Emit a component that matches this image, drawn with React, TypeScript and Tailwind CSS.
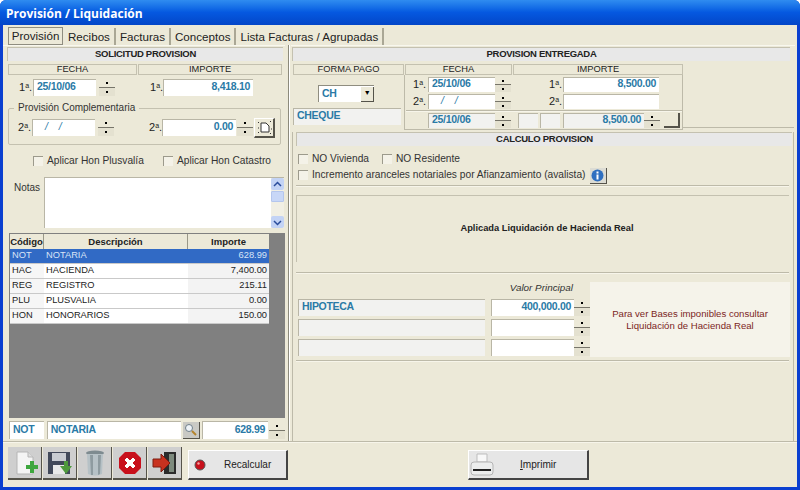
const font = { fontFamily: '"Liberation Sans", Arial, sans-serif' };

const val = "font-bold text-[#2a7aa6] text-[10.5px] tracking-[-0.3px]";

const Spin = ({ h = 17 }: { h?: number }) => (
  <div className={`flex w-[16px] flex-col ${h === 15 ? "h-[15px]" : "h-[17px]"}`}>
    <div className="flex flex-1 items-center justify-center border-b border-[#77756a] bg-[#ece9d8]">
      <div className="h-[2px] w-[2px] bg-black" />
    </div>
    <div className="flex flex-1 items-center justify-center bg-[#e4e1d0]">
      <div className="h-[2px] w-[2px] bg-black" />
    </div>
  </div>
);

const Box = ({ className = "", children }: { className?: string; children?: React.ReactNode }) => (
  <div className={`flex items-center overflow-hidden border-l border-t border-[#b9b6a6] px-[3px] pb-[2px] ${val} ${className}`}>
    {children}
  </div>
);

const Blank = () => (
  <span className="flex gap-[11px] font-normal italic">
    <span>/</span>
    <span>/</span>
  </span>
);

const Head = ({ className = "", children }: { className?: string; children: React.ReactNode }) => (
  <div className={`flex h-[11px] items-center justify-center border border-[#c4c1b0] text-[9.3px] leading-none text-[#222] ${className}`}>
    {children}
  </div>
);

const Banner = ({ className = "", children }: { className?: string; children: React.ReactNode }) => (
  <div className={`flex h-[14px] items-center justify-center border-l border-t border-[#c4c1b0] bg-[#e8e8e8] text-[9.5px] font-bold tracking-[-0.3px] text-[#222] ${className}`}>
    {children}
  </div>
);

const Check = ({ label, className = "" }: { label: string; className?: string }) => (
  <div className={`flex items-center gap-[4px] text-[10.2px] leading-none text-[#333] ${className}`}>
    <div className="h-[10px] w-[10px] border-l border-t border-[#9c9a8c] bg-[#f4f2e8]" />
    {label}
  </div>
);

const Ord = ({ n, className = "" }: { n: string; className?: string }) => (
  <div className={`text-[11px] leading-none text-[#222] ${className}`}>
    {n}
    <sup className="text-[7px]">a</sup>.
  </div>
);

const Sep = ({ className = "" }: { className?: string }) => (
  <div className={`h-[2px] border-t border-[#bdbaa9] bg-[#f7f5ea] ${className}`} />
);

const NewIcon = () => (
  <svg width="26" height="26" viewBox="0 0 26 26">
    <path d="M5 2h11l5 5v17H5z" fill="#f4f4f4" stroke="#b5b5b5" />
    <path d="M16 2v5h5" fill="#ddd" stroke="#b5b5b5" />
    <path d="M14 15h4v-4h4v4h4v4h-4v4h-4v-4h-4z" fill="#3da63d" />
  </svg>
);
const SaveIcon = () => (
  <svg width="28" height="26" viewBox="0 0 28 26">
    <path d="M2 2h22v22H2z" fill="#42495a" />
    <path d="M6 3h14v8H6z" fill="#c9ccd2" />
    <path d="M7 15h12v9H7z" fill="#e9e9e9" />
    <path d="M18 11h4v5h4l-6 8-6-8h4z" fill="#4f9a3d" />
  </svg>
);
const TrashIcon = () => (
  <svg width="22" height="28" viewBox="0 0 22 28">
    <ellipse cx="11" cy="4" rx="9" ry="2.5" fill="#7e8b90" />
    <path d="M3 5h16l-1 20q-7 3-14 0z" fill="#b6c1c6" />
    <path d="M6 6h3v20H7zM14 6h3l-1 19-2 1z" fill="#8e9ba0" />
  </svg>
);
const StopIcon = () => (
  <svg width="24" height="24" viewBox="0 0 24 24">
    <path d="M7 1h10l6 6v10l-6 6H7l-6-6V7z" fill="#c8101c" />
    <path d="M7 9l2-2 3 3 3-3 2 2-3 3 3 3-2 2-3-3-3 3-2-2 3-3z" fill="#fff" stroke="#fff" />
  </svg>
);
const ExitIcon = () => (
  <svg width="26" height="26" viewBox="0 0 26 26">
    <path d="M12 2h12v22H12z" fill="#2b2b2b" />
    <path d="M17 4h5v18h-5z" fill="#7d8a7d" />
    <path d="M1 9h8V4l9 9-9 9v-5H1z" fill="#c8321f" stroke="#7c1c10" />
  </svg>
);
const PrinterIcon = () => (
  <svg width="24" height="24" viewBox="0 0 24 24">
    <path d="M7 1h10v8H7z" fill="#f8f8f8" stroke="#bdbdbd" />
    <path d="M1 12q0-3 3-3h16q3 0 3 3v7q0 3-3 3H4q-3 0-3-3z" fill="#eceded" stroke="#b4b4b4" />
    <path d="M3 16h18v2H3z" fill="#222" />
  </svg>
);
const Chevron = ({ up }: { up?: boolean }) => (
  <svg width="9" height="7" viewBox="0 0 9 7" fill="none" stroke="#2a4c9c" strokeWidth="1.5">
    <path d={up ? "M1 5l3.5-3.5L8 5" : "M1 2l3.5 3.5L8 2"} />
  </svg>
);

const tabs = ["Recibos", "Facturas", "Conceptos", "Lista Facturas / Agrupadas"];

const rows = [
  ["NOT", "NOTARIA", "628.99"],
  ["HAC", "HACIENDA", "7,400.00"],
  ["REG", "REGISTRO", "215.11"],
  ["PLU", "PLUSVALIA", "0.00"],
  ["HON", "HONORARIOS", "150.00"],
];

export default function App() {
  return (
    <div style={font} className="flex h-[490px] w-[800px] flex-col overflow-hidden rounded-t-[6px] bg-[#0a3fd0]">
      {/* Title bar */}
      <div className="flex h-[25px] items-center bg-gradient-to-b from-[#2f8cf0] via-[#0558e0] to-[#0346c8] pl-[6px] pt-[2px]">
        <span style={{ fontFamily: '"Open Sans", sans-serif' }} className="text-[12px] font-bold text-white">
          Provisión / Liquidación
        </span>
      </div>

      <div className="mx-[3px] mb-[3px] flex flex-1 flex-col bg-[#ece9d8]">
        {/* Tabs */}
        <div className="flex h-[20px] items-end pl-[5px] text-[11.6px] leading-none text-[#222]">
          <div className="mr-[1px] flex h-[18px] w-[55px] items-center justify-center border border-[#8f8d80] bg-[#ece9d8]">Provisión</div>
          {tabs.map((t) => (
            <div key={t} className="flex h-[17px] items-center border-r-2 border-[#aaa795] bg-[#ece9d8] pl-[4px] pr-[4px]">
              {t}
            </div>
          ))}
        </div>

        <div className="flex h-[396px]">
          {/* Left column */}
          <div className="w-[282px] border-t border-[#f8f7ee] pl-[4px]">
            <Banner className="mt-[1px] w-[276px]">SOLICITUD PROVISION</Banner>
            <div className="mt-[3px] ml-[1px] flex gap-[1px]">
              <Head className="w-[129px]">FECHA</Head>
              <Head className="w-[144px]">IMPORTE</Head>
            </div>

            <div className="mt-[4px] flex h-[17px] items-center">
              <Ord n="1" className="ml-[12px] w-[14px]" />
              <Box className="h-[17px] w-[63px] bg-white">25/10/06</Box>
              <div className="ml-[3px]"><Spin /></div>
              <Ord n="1" className="ml-[35px] w-[13px]" />
              <Box className="h-[17px] w-[90px] justify-end bg-white">8,418.10</Box>
            </div>

            <fieldset className="mt-[6px] ml-[1px] h-[43px] w-[273px] rounded-[2px] border border-[#c4c1b0] pl-[9px]">
              <legend className="-ml-[4px] px-[4px] text-[10px] leading-[12px] text-[#333]">Provisión Complementaria</legend>
              <div className="mt-[5px] flex h-[17px] items-center">
                <Ord n="2" className="w-[14px]" />
                <Box className="h-[17px] w-[63px] bg-white pl-[12px]">
                  <Blank />
                </Box>
                <div className="ml-[3px]"><Spin /></div>
                <Ord n="2" className="ml-[35px] w-[13px]" />
                <Box className="h-[17px] w-[74px] justify-end bg-white">0.00</Box>
                <div className="ml-[1px]"><Spin /></div>
                <div className="ml-[1px] flex h-[20px] w-[21px] items-center justify-center border-b-2 border-r-2 border-l border-t border-b-[#55534a] border-r-[#55534a] border-l-white border-t-white">
                  <svg width="15" height="15" viewBox="0 0 15 15" fill="none" stroke="#333">
                    <path d="M4 3h5l3 3v6H4z" fill="#fff" />
                    <path d="M1 2l1 1M1 8h1M1 13l1-1M7 1v0M13 2l1-1M14 9h1M13 13l1 1" />
                  </svg>
                </div>
              </div>
            </fieldset>

            <div className="mt-[10px] flex h-[12px] items-center">
              <Check label="Aplicar Hon Plusvalía" className="ml-[26px] w-[130px]" />
              <Check label="Aplicar Hon Catastro" />
            </div>

            <div className="mt-[10px] flex h-[51px]">
              <div className="ml-[7px] mt-[3px] w-[30px] text-[10px] text-[#333]">Notas</div>
              <div className="flex w-[240px] border-l border-t border-[#b9b6a6] bg-white">
                <div className="flex-1" />
                <div className="flex w-[13px] flex-col bg-[#f1efe4]">
                  <div className="flex h-[12px] items-center justify-center rounded-[2px] bg-[#c3d3f5]"><Chevron up /></div>
                  <div className="mt-[1px] h-[11px] rounded-[1px] border border-[#b4c6ee] bg-[#c8d7f7]" />
                  <div className="flex-1" />
                  <div className="flex h-[12px] items-center justify-center rounded-[2px] bg-[#c3d3f5]"><Chevron /></div>
                </div>
              </div>
            </div>

            {/* Grid */}
            <div className="mt-[5px] ml-[2px] h-[185px] w-[276px] bg-[#808080] pl-[1px] pt-[1px] text-[9.3px] leading-none text-[#222]">
              <div className="flex h-[15px] w-[259px] bg-[#ece9d8] text-[9.5px] font-bold">
                <div className="flex w-[34px] items-center justify-center border-r border-[#9a9888]">Código</div>
                <div className="flex w-[144px] items-center justify-center border-r border-[#9a9888]">Descripción</div>
                <div className="flex flex-1 items-center justify-center">Importe</div>
              </div>
              {rows.map((r, i) => (
                <div key={r[0]} className={`flex h-[15px] w-[259px] items-center border-b border-[#c9c9c9] ${i === 0 ? "bg-[#316ac5] text-[#d8e4f6]" : "bg-white"}`}>
                  <div className={`flex h-full w-[34px] items-center pl-[2px] ${i === 0 ? "" : "bg-[#f6f6f6]"}`}>{r[0]}</div>
                  <div className="w-[144px] pl-[2px]">{r[1]}</div>
                  <div className={`flex h-full flex-1 items-center justify-end pr-[2px] ${i === 0 ? "" : "bg-[#f3f3f3]"}`}>{r[2]}</div>
                </div>
              ))}
            </div>

            <div className="mt-[3px] ml-[2px] flex h-[18px] items-center">
              <Box className="h-[18px] w-[35px] bg-white">NOT</Box>
              <Box className="ml-[3px] h-[18px] w-[135px] bg-white">NOTARIA</Box>
              <div className="ml-[2px] flex h-[17px] w-[17px] items-center justify-center border-b border-r border-[#55534a] bg-[#c9c9c4]">
                <svg width="13" height="13" viewBox="0 0 13 13" fill="none">
                  <circle cx="5" cy="5" r="3.5" fill="#eef3f7" stroke="#6f7f8a" />
                  <path d="M8 8l4 4" stroke="#b5842c" strokeWidth="2" />
                </svg>
              </div>
              <Box className="ml-[2px] h-[18px] w-[67px] justify-end bg-white">628.99</Box>
              <div className="ml-[1px]"><Spin /></div>
            </div>
          </div>

          {/* Divider */}
          <div className="ml-[3px] mr-[1px] w-[2px] border-r border-l border-l-[#8c8a7c] border-r-white bg-[#ece9d8]" />

          {/* Right column */}
          <div className="w-[504px] border-t border-[#f8f7ee] pl-[1px] pr-[1px]">
            <Banner className="mt-[1px] w-[498px]">PROVISION ENTREGADA</Banner>
            <div className="mt-[3px] flex gap-[1px] pl-[1px]">
              <Head className="w-[111px]">FORMA PAGO</Head>
              <Head className="w-[107px]">FECHA</Head>
              <Head className="w-[170px]">IMPORTE</Head>
            </div>

            <div className="flex h-[55px]">
              <div className="w-[111px] pl-[1px]">
                <div className={`ml-[25px] mt-[10px] flex h-[17px] w-[56px] items-center border-l border-t border-[#8f8d80] bg-white pl-[3px] ${val}`}>
                  <div className="flex-1">CH</div>
                  <div className="flex h-[15px] w-[13px] items-center justify-center border-b border-r border-[#55534a] bg-[#ece9d8] text-[7px] text-black">▼</div>
                </div>
                <Box className="mt-[6px] h-[17px] w-[108px] bg-[#f2f2f0]">CHEQUE</Box>
              </div>
              <div className="ml-[1px] h-[55px] w-[279px] border-l border-r border-b border-[#bdbaa9]">
                <div className="mt-[2px] flex h-[15px] items-center">
                  <Ord n="1" className="ml-[8px] w-[15px]" />
                  <Box className="h-[15px] w-[67px] bg-white">25/10/06</Box>
                  <Spin h={15} />
                  <Ord n="1" className="ml-[38px] w-[14px]" />
                  <Box className="h-[15px] w-[96px] justify-end bg-white">8,500.00</Box>
                </div>
                <div className="mt-[2px] flex h-[15px] items-center">
                  <Ord n="2" className="ml-[8px] w-[15px]" />
                  <Box className="h-[15px] w-[67px] bg-white pl-[12px]">
                    <Blank />
                  </Box>
                  <Spin h={15} />
                  <Ord n="2" className="ml-[38px] w-[14px]" />
                  <Box className="h-[15px] w-[96px] bg-white" />
                </div>
                <Sep className="mt-[1px] ml-[1px]" />
                <div className="mt-[1px] flex h-[15px] items-center pl-[23px]">
                  <Box className="h-[15px] w-[67px] bg-[#f2f2f0]">25/10/06</Box>
                  <Spin h={15} />
                  <Box className="ml-[7px] h-[15px] w-[20px] bg-[#f2f2f0]" />
                  <Box className="ml-[2px] h-[15px] w-[20px] bg-[#f2f2f0]" />
                  <Box className="ml-[3px] h-[15px] w-[81px] justify-end bg-[#f2f2f0]">8,500.00</Box>
                  <Spin h={15} />
                  <div className="ml-[4px] h-[15px] w-[16px] border-b-2 border-r-2 border-[#55534a] bg-[#ece9d8]" />
                </div>
              </div>
              <div className="mt-[52px] h-[2px] flex-1 border-t border-[#bdbaa9]" />
            </div>

            {/* Calculo */}
            <div className="mt-[1px] h-[310px] border-r border-l border-[#bdbaa9] pl-[3px] pr-[2px]">
              <Banner className="mt-[2px] w-[496px]">CALCULO PROVISION</Banner>
              <div className="mt-[8px] flex h-[11px] items-center pl-[2px]">
                <Check label="NO Vivienda" className="w-[84px]" />
                <Check label="NO Residente" />
              </div>
              <div className="mt-[1px] flex h-[19px] items-center pl-[2px]">
                <Check label="Incremento aranceles notariales por Afianzamiento (avalista)" />
                <div className="ml-[4px] flex h-[16px] w-[17px] items-center justify-center border-b border-r border-[#55534a] bg-[#dcdcd4]">
                  <svg width="13" height="13" viewBox="0 0 13 13">
                    <circle cx="6.5" cy="6.5" r="6" fill="#2f6fc0" />
                    <rect x="5.5" y="5.5" width="2" height="5" fill="#fff" />
                    <rect x="5.5" y="2.5" width="2" height="2" fill="#fff" />
                  </svg>
                </div>
              </div>
              <Sep className="w-[493px]" />
              <div className="mt-[8px] flex h-[67px] w-[493px] items-center justify-center border-l border-t border-[#c4c1b0] pl-[8px] text-[9.3px] font-bold text-[#222]">
                Aplicada Liquidación de Hacienda Real
              </div>
              <Sep className="mt-[10px] w-[493px]" />
              <div className="flex h-[84px] pt-[8px]">
                <div className="w-[294px] pl-[2px]">
                  <div className="h-[17px] pr-[17px] pt-[1px] text-right text-[9.9px] italic leading-none text-[#333]">Valor Principal</div>
                  {["HIPOTECA", "", ""].map((t, i) => (
                    <div key={i} className="mb-[3px] flex h-[17px]">
                      <Box className="h-[17px] w-[187px] bg-[#f2f2f0]">{t}</Box>
                      <Box className="ml-[6px] h-[17px] w-[83px] justify-end bg-white">{i === 0 ? "400,000.00" : ""}</Box>
                      <Spin />
                    </div>
                  ))}
                </div>
                <div className="flex h-[75px] w-[200px] items-center justify-center bg-[#f5f3ea] text-center text-[9.6px] leading-[12px] text-[#7c1f24]">
                  <div>
                    Para ver Bases imponibles consultar
                    <br />
                    Liquidación de Hacienda Real
                  </div>
                </div>
              </div>
              <Sep className="mt-[2px] w-[493px]" />
            </div>
          </div>
        </div>

        <Sep />

        {/* Footer */}
        <div className="flex flex-1 items-end pb-[7px] pl-[5px]">
          <div className="flex h-[33px] gap-[1px]">
            {[<NewIcon key="n" />, <SaveIcon key="s" />, <TrashIcon key="t" />, <StopIcon key="x" />, <ExitIcon key="e" />].map((icon, i) => (
              <div key={i} className="flex h-[33px] w-[34px] items-center justify-center border-b-2 border-r border-[#55534a] bg-[#cfcfcf]">
                {icon}
              </div>
            ))}
          </div>
          <div className="ml-[6px] flex h-[30px] w-[100px] items-center border-b-2 border-r-2 border-l border-t border-b-[#444] border-r-[#444] border-l-white border-t-white bg-[#e6e6e6] pl-[5px] text-[10px] text-[#222]">
            <svg width="12" height="12" viewBox="0 0 12 12">
              <circle cx="6" cy="6" r="5" fill="#c8101c" stroke="#555" />
              <circle cx="4.5" cy="4.5" r="1.2" fill="#f6a0a0" />
            </svg>
            <span className="ml-[18px]">Recalcular</span>
          </div>
          <div className="ml-[180px] flex h-[30px] w-[121px] items-center border-b-2 border-r-2 border-l border-t border-b-[#444] border-r-[#444] border-l-white border-t-white bg-[#e6e6e6] pl-[1px] text-[10.1px] text-[#222]">
            <PrinterIcon />
            <span className="ml-[26px]"><span className="underline">I</span>mprimir</span>
          </div>
        </div>
      </div>
    </div>
  );
}
